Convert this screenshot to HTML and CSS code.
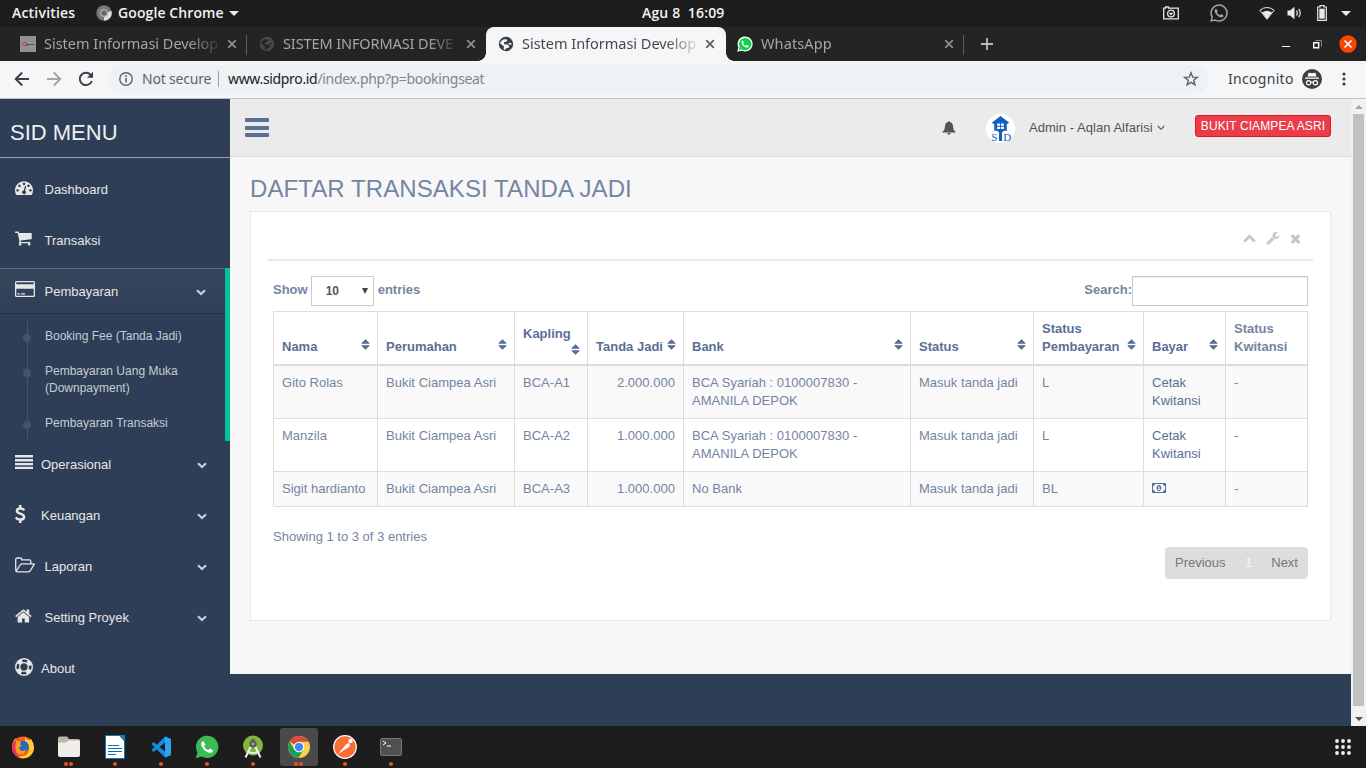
FILE: index.html
```html
<!DOCTYPE html>
<html lang="id">
<head>
<meta charset="utf-8">
<title>Sistem Informasi Developer</title>
<link rel="stylesheet" href="styles.css">
</head>
<body>
<svg class="defs" width="0" height="0">
  <defs>
    <symbol id="globe" viewBox="0 0 16 16"><circle cx="8" cy="8" r="7.200" fill="currentColor"/><path class="land" d="M2 7.500C3 4 5.500 2.800 8 3.200L9.500 4 8 6H6.200L6 8.200l3.600.3 1.800 2-1 1.500H8.500L7 14 5.600 13l.4-2.500L3.500 8.500zM10 7h3.500l-.5 2-1.700-.5z"/></symbol>
    <symbol id="sort" viewBox="0 0 9 11"><path d="M0.800 4.300 4.500 0.700 8.200 4.300zM0.800 6.700H8.200L4.500 10.300z" fill="currentColor" stroke="currentColor" stroke-width=".9" stroke-linejoin="round"/></symbol>
    <symbol id="down" viewBox="0 0 10 7"><path d="M1 1.200 5 5 9 1.200" fill="none" stroke="currentColor" stroke-width="2.200"/></symbol>
    <symbol id="x" viewBox="0 0 10 10"><path d="M1.200 1.200 8.800 8.800M8.800 1.200 1.200 8.800" fill="none" stroke="currentColor" stroke-width="1.700"/></symbol>
    <symbol id="wa" viewBox="0 0 24 24"><path d="M.8 23.200 2.400 17.400A11.200 11.200 0 1 1 6.600 21.600z"/><path class="phone" d="M8.200 6.200C7.200 6.200 6.200 7.500 6.200 9c0 3.500 4.800 8.700 8.800 8.800 1.700 0 3-1 3-2.600l-3-1.800-1.700 1.700c-1.800-.7-3.500-2.300-4.300-4.100L10.500 9.500z"/></symbol>
  </defs>
</svg>

<header class="topbar">
  <div class="top-left"><span class="activities">Activities</span>
    <svg class="mini-chrome" viewBox="0 0 16 16"><circle cx="8" cy="8" r="7.700" fill="#777"/><path d="M8 8 15.500 6A7.700 7.700 0 0 1 8 15.700z" fill="#ddd"/><circle cx="8" cy="8" r="4" fill="#aaa"/><circle cx="8" cy="8" r="2.600" fill="#666"/></svg>
    <span class="appname">Google Chrome</span><i class="caret"></i></div>
  <div class="clock">Agu 8&nbsp; 16:09</div>
  <div class="tray">
    <svg class="t-cam" viewBox="0 0 16 14" fill="none" stroke="#e6e6e6" stroke-width="1.300"><path d="M.7 2.200h1.800V1h3v1.200h9.800v10.600H.7z"/><circle cx="8" cy="7.500" r="3.400"/><path d="M6.500 6.800 8 8.500l1.500-1.700"/></svg>
    <svg class="t-wa" viewBox="0 0 24 24" fill="none" stroke="#a5a5a5" stroke-width="2"><path d="M1.500 22.500 3 17.600A10.600 10.600 0 1 1 7 21.400z"/><path fill="#a5a5a5" stroke="none" d="M8.200 6.200C7.200 6.200 6.200 7.500 6.200 9c0 3.500 4.800 8.700 8.800 8.800 1.700 0 3-1 3-2.600l-3-1.800-1.700 1.700c-1.800-.7-3.500-2.300-4.300-4.100L10.500 9.500z"/></svg>
    <svg class="t-wifi" viewBox="0 0 16 13"><path d="M.8 3.300Q8-2.300 15.200 3.300L8 12.300z" fill="none" stroke="#e8e8e8"/><path d="M3 5.400Q8 2 13 5.400L8 12z" fill="#e8e8e8"/></svg>
    <svg class="t-vol" viewBox="0 0 16 14"><path d="M.5 4.500H3L7.500.8v12.400L3 9.500H.5z" fill="#e8e8e8"/><path d="M9.500 4.500q1.800 2.500 0 5M11.700 2.800q3 4.200 0 8.400" fill="none" stroke="#e8e8e8" stroke-width="1.200"/></svg>
    <svg class="t-bat" viewBox="0 0 10 16"><path d="M.7 2H3V.7h4V2h2.300v13.300H.7z" fill="none" stroke="#e8e8e8" stroke-width="1.200"/><path d="M2.300 3.700h5.400v10H2.300z" fill="#e8e8e8"/></svg>
    <i class="caret"></i>
  </div>
</header>

<nav class="tabs">
  <div class="tab first">
    <svg class="fav" viewBox="0 0 16 16"><path fill="#919191" d="M0 0h16v16H0z"/><path d="M2 9 5 6l3 3M3 9.500h5" fill="none" stroke="#b04444"/><path d="M6 8.500h8" stroke="#6c4c4c"/></svg>
    <span class="title">Sistem Informasi Develop</span><svg class="close"><use href="#x"/></svg>
  </div>
  <div class="tab"><svg class="fav dim"><use href="#globe"/></svg><span class="title t2">SISTEM INFORMASI DEVE</span><svg class="close"><use href="#x"/></svg></div>
  <div class="tab active"><svg class="fav"><use href="#globe"/></svg><span class="title">Sistem Informasi Develop</span><svg class="close"><use href="#x"/></svg></div>
  <div class="tab last"><svg class="fav" viewBox="-1 -1 26 26"><g fill="#fff" stroke="#fff" stroke-width="2"><path d="M.8 23.200 2.400 17.400A11.200 11.200 0 1 1 6.600 21.600z"/></g><path fill="#06d44b" d="M2 22 3.600 17A10 10 0 1 1 7 20.600z"/><path fill="#fff" d="M8.200 6.200C7.200 6.200 6.200 7.500 6.200 9c0 3.500 4.800 8.700 8.800 8.800 1.700 0 3-1 3-2.600l-3-1.800-1.700 1.700c-1.800-.7-3.500-2.300-4.300-4.100L10.500 9.500z"/></svg><span class="title">WhatsApp</span><svg class="close"><use href="#x"/></svg></div>
  <svg class="plus" viewBox="0 0 12 12"><path d="M6 0v12M0 6h12" stroke="#bdbdbd" stroke-width="1.800"/></svg>
  <div class="winbtns"><i class="min"></i>
    <svg class="restore" viewBox="0 0 9 9" fill="none"><path d="M2.500.5h6v6" stroke="#888"/><path d="M.7 2.700h5v5h-5z" stroke="#fff" stroke-width="1.400"/></svg>
    <svg class="wclose" viewBox="0 0 18 18"><circle cx="9" cy="9" r="8.700" fill="#fc4503"/><path d="M5.500 5.500l7 7M12.500 5.500l-7 7" stroke="#fff" stroke-width="1.700"/></svg></div>
</nav>

<div class="toolbar">
  <svg class="nv" viewBox="0 0 16 16"><path d="M15 8H2M8.200 1.500 1.700 8l6.500 6.500" fill="none" stroke="#3c3f43" stroke-width="1.900"/></svg>
  <svg class="nv" viewBox="0 0 16 16"><path d="M1 8h13M7.800 1.500 14.300 8l-6.500 6.500" fill="none" stroke="#a3a5a8" stroke-width="1.900"/></svg>
  <svg class="nv" viewBox="0 0 16 16"><path d="M13.800 10A6.200 6.200 0 1 1 12.500 3.600L14 5" fill="none" stroke="#3c3f43" stroke-width="2"/><path d="M15 .8v6H9z" fill="#3c3f43"/></svg>
  <div class="omni">
    <svg class="info" viewBox="0 0 14 14"><circle cx="7" cy="7" r="6.200" fill="none" stroke="#5f6368" stroke-width="1.400"/><path d="M6.200 6h1.600v4.500H6.200zM6.200 3.300h1.600v1.600H6.200z" fill="#5f6368"/></svg>
    <span class="notsec">Not secure</span><i class="vsep"></i>
    <span class="url"><b>www.sidpro.id</b>/index.php?p=bookingseat</span>
    <svg class="star" viewBox="0 0 16 16"><path d="M8 1.800 9.700 6.100l4.600.3-3.600 2.900 1.200 4.500L8 11.300l-3.900 2.500 1.200-4.500-3.600-2.900 4.600-.3z" fill="none" stroke="#5f6368" stroke-width="1.400"/></svg>
  </div>
  <span class="incog">Incognito</span>
  <svg class="spy" viewBox="0 0 20 20"><circle cx="10" cy="10" r="10" fill="#3d3f42"/><path d="M6.500 3.700 10 4.300l3.500-.6L14.500 7.500h-9zM3 8.500h14v1.300H3z" fill="#fff"/><g fill="none" stroke="#fff" stroke-width="1.200"><circle cx="6.600" cy="13.800" r="2.100"/><circle cx="13.400" cy="13.800" r="2.100"/><path d="M8.700 13.500q1.300-.8 2.600 0"/></g></svg>
  <svg class="kebab" viewBox="0 0 4 14" fill="#3c3f43"><circle cx="2" cy="2" r="1.600"/><circle cx="2" cy="7" r="1.600"/><circle cx="2" cy="12" r="1.600"/></svg>
</div>

<div class="page">
  <aside class="sidebar">
    <div class="brand">SID MENU</div>
    <ul class="menu">
      <li><a><svg class="ic w18" viewBox="0 128 1792 1536"><path d="M384 1152q0-53-37.500-90.500t-90.500-37.500-90.500 37.500-37.500 90.500 37.500 90.500 90.500 37.500 90.500-37.500 37.500-90.500zm192-448q0-53-37.500-90.500t-90.500-37.500-90.500 37.500-37.500 90.500 37.500 90.500 90.500 37.500 90.500-37.500 37.500-90.500zm428 481l101-382q6-26-7.500-48.500t-38.500-29.500-48 6.500-30 39.500l-101 382q-60 5-107 43.500t-63 98.500q-20 77 20 146t117 89 146-20 89-117q16-60-6-117t-72-91zm660-33q0-53-37.500-90.500t-90.500-37.500-90.500 37.500-37.500 90.500 37.500 90.500 90.500 37.500 90.500-37.500 37.500-90.500zm-640-640q0-53-37.500-90.500t-90.500-37.500-90.500 37.500-37.500 90.500 37.500 90.500 90.500 37.500 90.500-37.500 37.500-90.500zm448 192q0-53-37.500-90.500t-90.500-37.500-90.500 37.500-37.500 90.500 37.500 90.500 90.500 37.500 90.500-37.500 37.500-90.500zm320 448q0 261-141 483-19 29-54 29h-1402q-35 0-54-29-141-221-141-483 0-182 71-348t191-286 286-191 348-71 348 71 286 191 191 286 71 348z"/></svg><span>Dashboard</span></a></li>
      <li><a><svg class="ic w18" viewBox="64 200 1792 1536"><path d="M704 1536q0 52-38 90t-90 38-90-38-38-90 38-90 90-38 90 38 38 90zm896 0q0 52-38 90t-90 38-90-38-38-90 38-90 90-38 90 38 38 90zm128-1088v512q0 24-16.500 42.500t-40.500 21.500l-1044 122q13 60 13 70 0 16-24 64h920q26 0 45 19t19 45-19 45-45 19h-1024q-26 0-45-19t-19-45q0-11 8-31.500t16-36 21.500-40 15.500-29.500l-177-823h-204q-26 0-45-19t-19-45 19-45 45-19h256q16 0 28.500 6.500t19.500 15.500 13 24.500 8 26 5.500 29.500 4.500 26h1201q26 0 45 19t19 45z"/></svg><span>Transaksi</span></a></li>
      <li class="open"><a><svg class="ic w20" viewBox="0 0 20 16"><path fill-rule="evenodd" d="M1.500 0h17A1.500 1.500 0 0 1 20 1.500v13a1.500 1.500 0 0 1-1.500 1.500h-17A1.500 1.500 0 0 1 0 14.500v-13A1.500 1.500 0 0 1 1.500 0zM1.300 1.300v2h17.400v-2zM1.300 7.800v6.900h17.400V7.800zM2.500 12.200h2.300v1.300H2.500zM6 12.200h4v1.300H6z"/></svg><span>Pembayaran</span><svg class="chev"><use href="#down"/></svg></a>
        <ul class="sub"><li>Booking Fee (Tanda Jadi)</li><li>Pembayaran Uang Muka (Downpayment)</li><li>Pembayaran Transaksi</li></ul></li>
      <li class="n"><a><svg class="ic w18 bars" viewBox="0 0 18 14"><path d="M0 0h18v2.500H0zM0 4h18v2.400H0zM0 8h18v2.300H0zM0 11.700h18V14H0z"/></svg><span>Operasional</span><svg class="chev"><use href="#down"/></svg></a></li>
      <li class="n"><a><svg class="ic w18 tall" viewBox="0 0 18 18"><path d="M9.300 5.200Q7.900 3.400 5.200 3.400 1.900 3.400 1.900 5.800 1.900 7.700 5.200 8.600 9 9.600 9 11.900 9 14.600 5.200 14.600 2.300 14.600.8 12.500M5.200 0v3.500M5.200 14.500V18" fill="none" stroke="#e7e7e7" stroke-width="2.500"/></svg><span>Keuangan</span><svg class="chev"><use href="#down"/></svg></a></li>
      <li><a><svg class="ic w20" viewBox="0 0 20 16"><path d="M.7 12.800V2.500Q.7 1 2.200 1h3.200q1.400 0 1.400 1.400v.5h7.500q1.500 0 1.500 1.500v2.200M1.200 14.200 5.100 8q.8-1.200 2-1.200h11.500q1 0 .5.900l-3.800 5.900q-.8 1.200-2.200 1.200H2.200Q.7 14.800.7 13" fill="none" stroke="#e7e7e7" stroke-width="1.300"/></svg><span>Laporan</span><svg class="chev"><use href="#down"/></svg></a></li>
      <li><a><svg class="ic w18 home" viewBox="60 200 1792 1536"><path d="M1472 992v480q0 26-19 45t-45 19h-384v-384h-256v384h-384q-26 0-45-19t-19-45v-480q0-1 .5-3t.5-3l575-474 575 474q1 2 1 6zm223-69l-62 74q-8 9-21 11h-3q-13 0-21-7l-692-577-692 577q-12 8-24 7-13-2-21-11l-62-74q-8-10-7-23.500t11-21.500l719-599q32-26 76-26t76 26l244 204v-195q0-14 9-23t23-9h192q14 0 23 9t9 23v408l219 182q10 8 11 21.500t-7 23.500z"/></svg><span>Setting Proyek</span><svg class="chev"><use href="#down"/></svg></a></li>
      <li class="n"><a><svg class="ic w18 tall" viewBox="0 0 18 18"><g fill="none" stroke="#e7e7e7"><circle cx="9" cy="9" r="8.300" stroke-width="1.400"/><circle cx="9" cy="9" r="4.300" stroke-width="1.300"/><circle cx="9" cy="9" r="6.300" stroke-width="4.500" stroke-dasharray="4.948 4.948" stroke-dashoffset="-2.474"/></g></svg><span>About</span></a></li>
    </ul>
  </aside>

  <main class="main">
    <div class="topnav">
      <div class="burger"><i></i><i></i><i></i></div>
      <svg class="bell" viewBox="0 0 14 14"><path d="M7 0q.8 0 .8 1Q11 1.700 11 5.500q0 3.500 2.700 5.400v.6H.3v-.6Q3 9 3 5.500 3 1.700 6.200 1 6.200 0 7 0zM5.300 12h3.400q-.3 1.700-1.700 1.700T5.300 12z" fill="#515356"/></svg>
      <svg class="avatar" viewBox="0 0 29 29"><circle cx="14.500" cy="14.500" r="14.500" fill="#fff"/><text x="5.200" y="27" class="logo">S</text><text x="17.200" y="27" class="logo">D</text><path d="M14.500 2 23 8.500l-1 1.300h-1.200v7h-3L16 18.500V27h-3v-8.500l-1.800-1.700h-3v-7H7L6 8.500z" fill="#1560bd"/><path d="M11.200 9.500h2.900v2.300h-2.900zM15 9.500h2.900v2.300H15zM11.200 12.700h2.900V15h-2.900zM15 12.700h2.900V15H15z" fill="#fff"/></svg>
      <span class="user">Admin - Aqlan Alfarisi</span>
      <svg class="ang" viewBox="0 0 8 6"><path d="M.8 1 4 4.300 7.200 1" fill="none" stroke="#515356" stroke-width="1.100"/></svg>
      <span class="site">BUKIT CIAMPEA ASRI</span>
    </div>
    <div class="content">
      <h1>DAFTAR TRANSAKSI TANDA JADI</h1>
      <section class="panel">
        <div class="tools">
          <svg class="up" viewBox="0 0 12 8"><path d="M1.200 6.800 6 2l4.800 4.800" fill="none" stroke="#c5c7cb" stroke-width="2.700"/></svg>
          <svg class="wr" viewBox="60 128 1700 1664"><path fill="#c5c7cb" d="M448 1472q0-26-19-45t-45-19-45 19-19 45 19 45 45 19 45-19 19-45zm644-420l-682 682q-37 37-90 37-52 0-91-37l-106-108q-38-36-38-90 0-53 38-91l681-681q39 98 114.500 173.500t173.500 114.500zm634-435q0 39-23 106-47 134-164.500 217.500t-258.500 83.500q-185 0-316.500-131.500t-131.500-316.500 131.500-316.500 316.500-131.500q58 0 121.500 16.500t107.500 46.500q16 11 16 28t-16 28l-293 169v224l193 107q5-3 79-48.500t135.500-81 70.500-35.500q15 0 23.500 10t8.500 25z"/></svg>
          <svg class="xx" viewBox="0 0 10 10"><path d="M1.200 1.200l7.600 7.600M8.800 1.200 1.200 8.800" stroke="#c5c7cb" stroke-width="3.200"/></svg>
        </div>
        <div class="controls"><span class="lb">Show</span><span class="select">10<i></i></span><span class="lb ent">entries</span><span class="lb srch">Search:</span><input class="search" type="text"></div>
        <table>
          <colgroup><col class="c1"><col class="c2"><col class="c3"><col class="c4"><col class="c5"><col class="c6"><col class="c7"><col class="c8"><col class="c9"></colgroup>
          <thead><tr>
            <th><div>Nama<svg><use href="#sort"/></svg></div></th>
            <th><div>Perumahan<svg><use href="#sort"/></svg></div></th>
            <th><div class="wrap">Kapling<svg><use href="#sort"/></svg></div></th>
            <th><div>Tanda Jadi<svg><use href="#sort"/></svg></div></th>
            <th><div>Bank<svg><use href="#sort"/></svg></div></th>
            <th><div>Status<svg><use href="#sort"/></svg></div></th>
            <th><div>Status<br>Pembayaran<svg><use href="#sort"/></svg></div></th>
            <th><div>Bayar<svg><use href="#sort"/></svg></div></th>
            <th class="plain">Status<br>Kwitansi</th>
          </tr></thead>
          <tbody>
            <tr class="odd"><td>Gito Rolas</td><td>Bukit Ciampea Asri</td><td>BCA-A1</td><td class="r">2.000.000</td><td>BCA Syariah : 0100007830 -<br>AMANILA DEPOK</td><td>Masuk tanda jadi</td><td>L</td><td class="lk">Cetak<br>Kwitansi</td><td>-</td></tr>
            <tr><td>Manzila</td><td>Bukit Ciampea Asri</td><td>BCA-A2</td><td class="r">1.000.000</td><td>BCA Syariah : 0100007830 -<br>AMANILA DEPOK</td><td>Masuk tanda jadi</td><td>L</td><td class="lk">Cetak<br>Kwitansi</td><td>-</td></tr>
            <tr class="odd"><td>Sigit hardianto</td><td>Bukit Ciampea Asri</td><td>BCA-A3</td><td class="r">1.000.000</td><td>No Bank</td><td>Masuk tanda jadi</td><td>BL</td><td class="lk"><svg class="money" viewBox="0 0 14 10"><path fill-rule="evenodd" fill="#5a6f96" d="M0 0h14v10H0zM3 1Q3 3 1 3v4q2 0 2 2h8q0-2 2-2V3q-2 0-2-2z"/><path fill-rule="evenodd" fill="#5a6f96" d="M7 1.800a2.300 3.200 0 1 1-.01 0zM6 3.500v.8h.6v2H6V7h2.200v-.7h-.6V3.500z"/></svg></td><td>-</td></tr>
          </tbody>
        </table>
        <div class="showing">Showing 1 to 3 of 3 entries</div>
        <div class="pager"><span>Previous</span><span class="cur">1</span><span>Next</span></div>
      </section>
    </div>
  </main>
  <div class="scroll"><i class="su"></i><div class="thumb"></div><i class="sd"></i></div>
</div>

<footer class="dock">
  <div class="app"><svg viewBox="0 0 24 24"><circle cx="12" cy="12.500" r="11" fill="#fb5a22"/><path d="M14 1.500q1 3 4 4l2-1.500q3 4 3 9a11 11 0 0 1-17 8.500q13 1 12-9-1-5-4-6z" fill="#ffcf2b"/><circle cx="12" cy="11.500" r="5.800" fill="#2568c7"/><path d="M1.500 8Q3 4 5 3l1 3 4 .5-1 3 2 1.500-3 1 1 3q3 2 6-.5-1 5-6 5-7-1-7.500-9z" fill="#ff9a1d"/><path d="M1.500 9Q0 20 9.500 23q-6-5-5-14l1-5z" fill="#ee2e62"/></svg></div>
  <div class="app d2"><svg viewBox="0 0 24 24"><path d="M1 3.500Q1 1.500 3 1.500h7l2 2.500h9q2 0 2 2V20H1z" fill="#bdb5a8"/><path d="M1 7.500h8l2-2h12V20q0 2-2 2H3q-2 0-2-2z" fill="#f0eeea"/></svg></div>
  <div class="app d1"><svg viewBox="0 0 24 24"><path d="M2.500.5h14L21.500 6v17.500h-19z" fill="#fff" stroke="#1176b4"/><path d="M16 0h6v6z" fill="#0c7fc0"/><path d="M5 10.500h11M5 13.500h14M5 16.500h14M5 19.500h8" stroke="#0f6faa"/></svg></div>
  <div class="app d1"><svg viewBox="0 0 24 24"><path d="M16 1.500 22 4v16l-6 2.500L2.500 9 4.500 7 16 16.500v-9L4.500 17l-2-2z" fill="#168ddd"/><path d="M16 1.500 22 4v16l-6 2.500z" fill="#2aa5ef"/></svg></div>
  <div class="app d1"><svg class="wag" viewBox="0 0 24 24"><use href="#wa"/></svg></div>
  <div class="app d1"><svg viewBox="0 0 24 24"><circle cx="12" cy="10.500" r="10" fill="#83b641"/><path d="M10.500 10 4.500 22.500M13.500 10l6 12.500" stroke="#eee" stroke-width="2" fill="none"/><path d="M6.500 16q5.500 4 11 0" stroke="#eee" stroke-width="1.700" fill="none"/><path d="M12 4v3" stroke="#525b5e" stroke-width="3"/><circle cx="12" cy="9" r="3.600" fill="#525b5e"/><circle cx="12" cy="9" r="1.400" fill="#9fbd72"/></svg></div>
  <div class="app d2 on"><svg viewBox="0 0 24 24"><circle cx="12" cy="12" r="11" fill="#fbd04a"/><path d="M12 12 2.500 6.500A11 11 0 0 1 21.600 6.700H12z" fill="#db4a3e"/><path d="M2.500 6.500A11 11 0 0 0 11.500 23L16.500 14.500 12 12 7.300 14.700z" fill="#219b5c"/><circle cx="12" cy="12" r="5.300" fill="#fff"/><circle cx="12" cy="12" r="4.200" fill="#4688f1"/></svg></div>
  <div class="app d1"><svg viewBox="0 0 24 24"><circle cx="12" cy="12" r="11.300" fill="#fc6c37" stroke="#fff" stroke-width="1.200"/><path d="M5 19 13 9.500q2-2 3.500-1 1 1.500-.5 3.500z" fill="#fff"/><circle cx="17.500" cy="6" r="2.200" fill="#fff"/></svg></div>
  <div class="app d1"><svg viewBox="0 0 24 24"><rect x="1.500" y="3.500" width="21" height="17" rx="1.500" fill="#4e5051" stroke="#777"/><path d="M4 6l3 2-3 2M8 11h4" fill="none" stroke="#fff"/></svg></div>
  <svg class="grid" viewBox="0 0 18 18" fill="#eee"><g id="gr"><circle cx="3" cy="3" r="1.900"/><circle cx="9" cy="3" r="1.900"/><circle cx="15" cy="3" r="1.900"/></g><use href="#gr" y="6"/><use href="#gr" y="12"/></svg>
</footer>
</body>
</html>
```

FILE: styles.css
```css
* { box-sizing: border-box; }
body { margin: 0; width: 1366px; height: 768px; overflow: hidden; display: flex; flex-direction: column; background: #1d1d1d; font-family: "Liberation Sans", Arial, sans-serif; font-size: 13px; }
svg { display: block; flex: none; }
.defs { position: absolute; }
ul { list-style: none; margin: 0; padding: 0; }

/* desktop bar */
.topbar { height: 27px; flex: none; display: grid; grid-template-columns: 1fr auto 1fr; align-items: center; background: #1d1d1d; color: #f2f2f2; padding-bottom: 1px; font: 600 14px/26px "Open Sans", "Noto Sans", sans-serif; }
.top-left { display: flex; align-items: center; padding-left: 12px; }
.activities { width: 84px; letter-spacing: .2px; }
.mini-chrome { width: 16px; height: 16px; margin-right: 6px; }
.appname { width: 107px; white-space: nowrap; letter-spacing: .1px; }
.caret { border: 5px solid transparent; border-top-color: #eee; border-bottom: 0; margin-left: 4px; }
.clock { width: 82px; white-space: nowrap; letter-spacing: .15px; }
.tray { display: flex; align-items: center; justify-content: flex-end; padding-right: 15px; }
.t-cam { width: 16px; height: 14px; margin-right: 31px; }
.t-wa { width: 18px; height: 18px; margin-right: 31px; }
.t-wifi { width: 16px; height: 13px; margin-right: 12px; }
.t-vol { width: 16px; height: 14px; margin-right: 14px; }
.t-bat { width: 10px; height: 16px; margin-right: 10px; }

/* tab strip */
.tabs { height: 34px; flex: none; display: flex; align-items: center; background: #242424; padding-left: 8px; font: 14.500px/32px "Noto Sans", sans-serif; color: #a6a6a6; }
.tab { width: 239px; height: 34px; display: flex; align-items: center; padding-left: 12px; position: relative; }
.tab.first::after, .tab.last::after { content: ""; position: absolute; right: 0; top: 8px; height: 20px; width: 1px; background: #5d5d5d; }
.fav { width: 16px; height: 16px; margin-right: 8px; color: #3d4043; --land: #f5f6f8; }
.land { fill: var(--land); }
.fav.dim { color: #484848; --land: #242424; }
.title { width: 176px; height: 34px; white-space: nowrap; letter-spacing: -.02px; -webkit-mask-image: linear-gradient(90deg, #000 82%, transparent 102%); mask-image: linear-gradient(90deg, #000 82%, transparent 102%); }
.t2 { letter-spacing: -.1px; }
.last .title { letter-spacing: .1px; }
.close { width: 10px; height: 10px; margin-left: 7px; color: #8f8f8f; }
.tab.active { background: #f5f6f8; color: #45484c; border-radius: 8px 8px 0 0; width: 240px; margin-right: -1px; }
.tab.active .close { color: #5b5e62; }
.active::before, .active::after { content: ""; position: absolute; bottom: 0; width: 8px; height: 8px; }
.active::before { left: -8px; background: radial-gradient(circle at 0 0, transparent 7.500px, #f5f6f8 8px); }
.active::after { right: -8px; background: radial-gradient(circle at 100% 0, transparent 7.500px, #f5f6f8 8px); }
.plus { width: 12px; height: 12px; margin-left: 17px; }
.winbtns { margin-left: auto; display: flex; align-items: center; padding-right: 9px; }
.min { width: 8px; height: 1px; background: #fff; margin: 4px 23px 0 0; }
.restore { width: 9px; height: 9px; margin-right: 17px; }
.wclose { width: 18px; height: 18px; }

/* toolbar */
.toolbar { height: 38px; flex: none; display: flex; align-items: center; padding: 0 0 2px 14px; background: #f5f6f8; border-bottom: 1px solid #bfc5cd; font: 14px/28px "Noto Sans", sans-serif; }
.nv { width: 16px; height: 16px; margin-right: 16px; }
.omni { width: 1101px; height: 28px; margin-left: -2px; border-radius: 14px; background: #eef2f4; display: flex; align-items: center; padding-left: 11px; color: #5f6368; }
.info { width: 14px; height: 14px; margin-right: 9px; }
.notsec { width: 76px; white-space: nowrap; letter-spacing: -.2px; }
.vsep { width: 1px; height: 16px; background: #9b9ea2; margin-right: 9px; }
.url { color: #80868b; white-space: nowrap; letter-spacing: -.33px; }
.url b { font-weight: 400; color: #202124; }
.star { width: 16px; height: 16px; margin: 0 10px 0 auto; }
.incog { width: 74px; margin-left: 19px; color: #3c4043; letter-spacing: .3px; }
.spy { width: 20px; height: 20px; }
.kebab { width: 4px; height: 14px; margin-left: 20px; }

/* page */
.page { height: 627px; flex: none; display: flex; background: #2f3e57; }
.sidebar { width: 230px; flex: none; color: #e7e7e7; }
.brand { height: 59px; padding: 9px 0 0 10px; border-bottom: 1px solid #a19fa3; font-size: 22px; line-height: 50px; color: #ecf0f1; }
.menu { padding-top: 8px; }
.menu > li > a { height: 46px; margin-bottom: 5px; display: flex; align-items: center; padding: 1px 23px 0 15px; }
.ic { margin-top: -4px; height: 15.500px; fill: #e7e7e7; }
.w18 { width: 18px; margin-right: 11.500px; }
.w20 { width: 20px; margin-right: 9.500px; height: 16px; }
.tall { height: 18px; }
.bars { height: 14px; margin-top: -6px; }
.home { margin-top: -2px; }
.n .w18 { margin-right: 8px; }
.chev { width: 10px; height: 7px; margin-left: auto; margin-top: 2px; color: #c4cfda; }
.menu .open { border-right: 5px solid #00c29a; height: 173px; }
.menu > .open > a { margin-bottom: 0; padding-right: 19px; border-top: 1px solid #596679; border-bottom: 1px solid #243145; background: linear-gradient(#35465c, #2f3f58); padding-top: 0; }
.sub { position: relative; height: 122px; margin-top: 5px; padding: 9px 10px 0 45px; font-size: 12px; line-height: 17px; color: #c6ccd4; }
.sub::before { content: ""; position: absolute; left: 27px; top: 0; width: 1px; height: 122px; background: #425668; }
.sub li { position: relative; margin-bottom: 18px; width: 160px; }
.sub li::before { content: ""; position: absolute; left: -22px; top: 6px; width: 8px; height: 8px; border-radius: 50%; background: #425568; }

.main { width: 1121px; height: 575px; background: #f7f7f7; flex: none; }
.topnav { height: 58px; background: #ebebeb; border-bottom: 1px solid #d9dee4; display: flex; align-items: center; padding-left: 15px; color: #515356; }
.burger { width: 23px; height: 19px; display: flex; flex-direction: column; justify-content: space-between; }
.burger i { height: 4px; background: #5a6f96; border-radius: 1px; }
.bell { width: 14px; height: 14px; margin-left: 674px; }
.avatar { width: 29px; height: 29px; margin: 1px 14px 0 30px; }
.logo { font: 11px "Liberation Serif", serif; fill: #1560bd; }
.user { width: 128px; white-space: nowrap; letter-spacing: .04px; }
.ang { width: 8px; height: 6px; margin-right: 30px; }
.site { width: 136px; height: 22px; margin-top: -3px; background: #e93d4a; border: 1px solid #e0162b; border-radius: 3px; color: #fff; font-size: 12px; line-height: 20px; letter-spacing: .1px; text-align: center; white-space: nowrap; }
.content { padding: 17px 20px 0; color: #7485a2; }
h1 { margin: 0; height: 37px; font-size: 24px; line-height: 30px; font-weight: 400; letter-spacing: .08px; }
.panel { height: 410px; background: #fff; border: 1px solid #e6e9ed; padding: 0 17px; }
.burger { width: 24px; margin-right: -1px; }
.tools { height: 49px; border-bottom: 2px solid #e6e9ed; display: flex; align-items: center; justify-content: flex-end; padding: 6px 12px 0 0; }
.up { width: 13px; height: 9px; }
.wr { width: 14px; height: 13px; margin: 0 10px 0 10px; }
.xx { width: 11px; height: 10px; }
.controls { display: flex; align-items: center; height: 30px; margin: 15px 5px 5px; padding: 0; }
.lb { font-weight: 700; padding-bottom: 3px; white-space: nowrap; }
.select { width: 63px; height: 30px; margin: 0 4px 0 3px; border: 1px solid #ccc; color: #555; font: 700 12px/28px "Liberation Sans", sans-serif; padding: 0 5px 0 14px; display: flex; justify-content: space-between; align-items: center; }
.select i { border: 3px solid transparent; border-top: 6px solid #444; border-bottom: 0; }
.srch { margin-left: auto; }
.search { width: 176px; height: 30px; border: 1px solid #c8c8c8; background: #fff; padding: 0; box-shadow: inset 0 1px 1px rgba(0,0,0,.075); }
table { width: 1035px; margin-left: 5px; table-layout: fixed; border-collapse: separate; border-spacing: 0; line-height: 18px; }
.c1 { width: 104px; } .c2 { width: 137px; } .c3 { width: 73px; } .c4 { width: 96px; } .c5 { width: 227px; } .c6 { width: 123px; } .c7 { width: 110px; } .c8 { width: 82px; } .c9 { width: 83px; }
th, td { border-left: 1px solid #ddd; border-bottom: 1px solid #ddd; padding: 8px; text-align: left; vertical-align: top; white-space: nowrap; }
th:last-child, td:last-child { border-right: 1px solid #ddd; }
th { height: 55px; border-top: 1px solid #ddd; border-bottom-width: 2px; vertical-align: bottom; color: #5a6f96; padding-right: 0; }
th.plain { color: #7485a2; }
th div { display: flex; justify-content: space-between; align-items: flex-end; padding-right: 7px; }
th svg { width: 9px; height: 11px; margin-bottom: 6px; }
th .wrap { flex-direction: column; align-items: flex-start; justify-content: flex-start; height: 31px; }
th .wrap svg { margin: 1px 0 0 auto; }
td { letter-spacing: .02px; }
.odd td { background: #f9f9f9; }
td.r { text-align: right; }
.lk { color: #5a6f96; }
.money { width: 14px; height: 10px; margin-top: 3px; }
.showing { margin: 20px 5px 0; line-height: 20px; }
.pager { width: 143px; height: 32px; margin: 0 5px 0 auto; border-radius: 4px; background: #ddd; display: flex; align-items: center; justify-content: space-between; padding: 0 10px 2px; color: #777; }
.pager .cur { color: #f7f7f7; margin: 0 -1px 0 0; }

.scroll { width: 15px; background: #f1f1f1; display: flex; flex-direction: column; align-items: center; padding: 5px 2px 5px 2px; }
.thumb { width: 11px; height: 592px; margin: 5px 0 auto; background: #c1c1c1; }
.su { border: 4px solid transparent; border-bottom-color: #a3a3a3; border-top: 0; margin-top: 1px; }
.sd { border: 4px solid transparent; border-top-color: #505050; border-bottom: 0; }

/* dock */
.dock { height: 42px; flex: none; display: flex; align-items: center; gap: 8px; padding-left: 4px; background: #1d1d1d; }
.app { width: 38px; height: 38px; display: flex; align-items: center; justify-content: center; position: relative; border-radius: 3px; }
.app svg { width: 24px; height: 24px; }
.app.on { background: #4a4a4a; }
.d1::after, .d2::after { content: ""; position: absolute; top: 34px; left: 17px; width: 4px; height: 4px; border-radius: 50%; background: #e95420; }
.d2::after { left: 14px; box-shadow: 5px 0 #e95420; }
.wag { fill: #3cba54; }
.phone { fill: #fff; }
.grid { width: 18px; height: 18px; margin: 0 14px 0 auto; }
```
